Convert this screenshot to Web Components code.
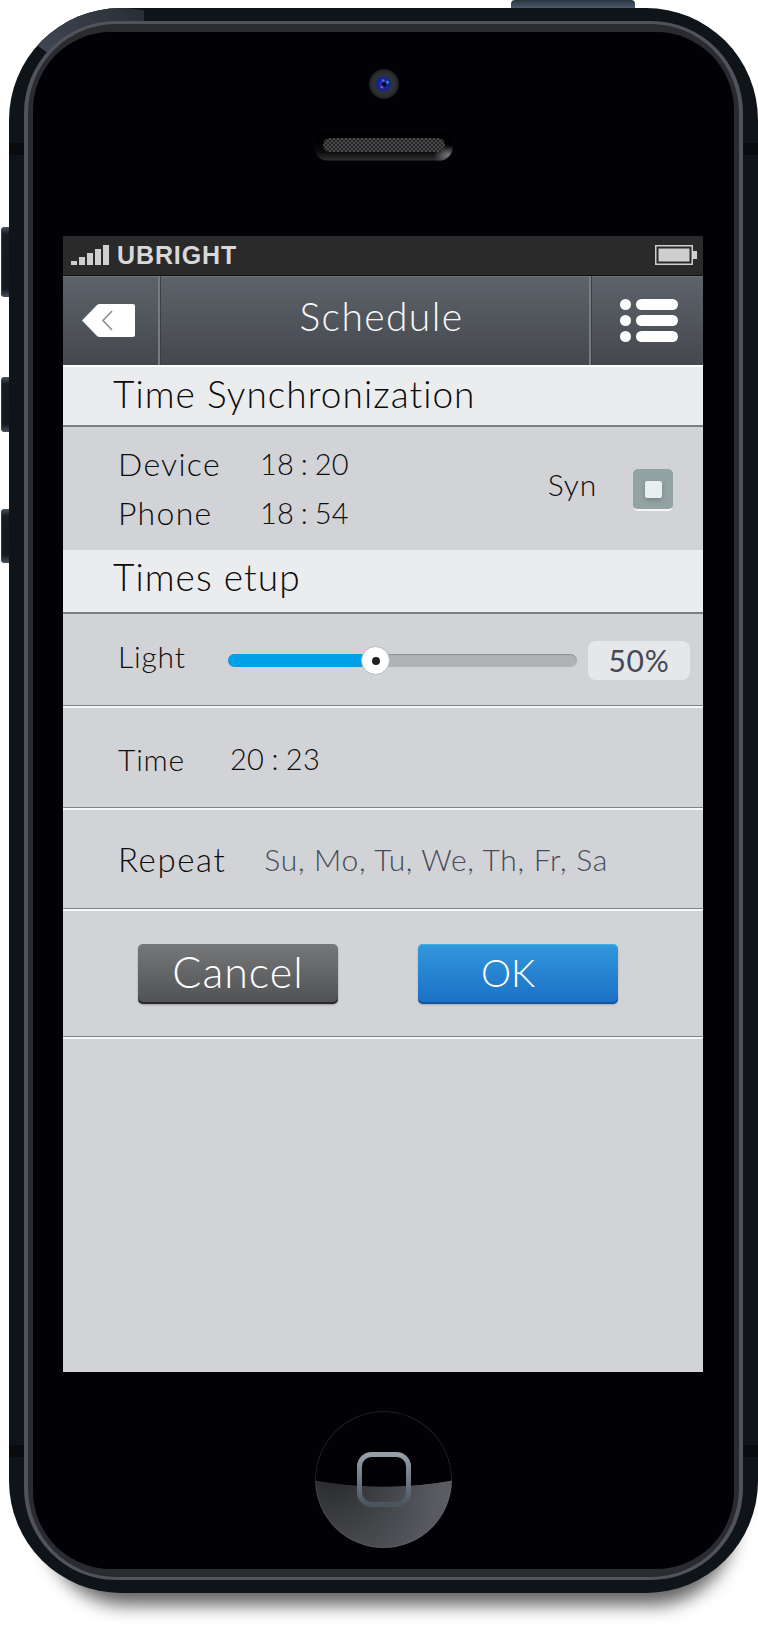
<!DOCTYPE html>
<html>
<head>
<meta charset="utf-8">
<title>Schedule</title>
<style>
  html, body { margin: 0; background: #fff; height: 1625px; overflow: hidden; }
  body { font-family: "Lato", "Liberation Sans", sans-serif; }
</style>
</head>
<body>
<phone-frame>
  <status-bar label="UBRIGHT"></status-bar>
  <nav-bar title="Schedule"></nav-bar>
  <section-head style="height:60px;padding-bottom:6px">Time Synchronization</section-head>
  <sync-panel device="18 : 20" phone="18 : 54"></sync-panel>
  <section-head style="height:64px">Times etup</section-head>
  <light-row value="50"></light-row>
  <setting-row label="Time" gap="45" height="102" style="padding-bottom:1px"><span>20 : 23</span></setting-row>
  <setting-row label="Repeat" gap="38" height="101" wide muted><span>Su, Mo, Tu, We, Th, Fr, Sa</span></setting-row>
  <action-row></action-row>
</phone-frame>

<script>
class PhoneFrame extends HTMLElement {
  constructor() {
    super();
    this.attachShadow({ mode: 'open' });
  }

  connectedCallback() {
    this.shadowRoot.innerHTML = `
      <style>
        :host {
          display: block;
          position: relative;
          box-sizing: border-box;
          width: 749px;
          height: 1585px;
          margin: 8px 0 0 9px;
          padding: 13px 15px;
          border-radius: 112px;
          background: #0f1418;
          box-shadow: 6px 42px 18px -30px rgba(0,0,0,.62);
        }
        .wedge {
          position: absolute;
          left: 0;
          top: 0;
          width: 224px;
          height: 224px;
          border-radius: 112px;
          background: linear-gradient(250deg, #2a2e35 30%, #424b58 75%);
          clip-path: polygon(0 17px, 0 0, 135px 0, 135px 30px, 50px 53px);
        }
        .notch { position: absolute; width: 15px; height: 12px; background: #090b0e; }
        .notch.tl { left: 0; top: 135px; }
        .notch.tr { right: 0; top: 135px; }
        .notch.bl { left: 0; bottom: 136px; }
        .notch.br { right: 0; bottom: 136px; }
        .side {
          position: absolute;
          left: -8px;
          width: 8px;
          border-radius: 4px 0 0 4px;
          background: linear-gradient(#4a535f 0, #161b21 7px, #141920 calc(100% - 8px), #47505c 100%);
          box-shadow: inset 1px 0 0 #3a424c;
        }
        .top-key {
          position: absolute;
          left: 502px;
          top: -8px;
          width: 124px;
          height: 8px;
          border-radius: 4px 4px 0 0;
          background: linear-gradient(#2b3541, #4c5a6b);
        }
        .ring {
          position: relative;
          box-sizing: border-box;
          height: 100%;
          border: solid #50535c;
          border-width: 3px 4px;
          border-radius: 92px;
          background: #2a2b2f;
          padding: 8px 5px;
        }
        .glass {
          box-sizing: border-box;
          height: 100%;
          border-radius: 78px;
          background: #010106;
          display: flex;
          flex-direction: column;
        }
        .top {
          height: 204px;
          flex: none;
          box-sizing: border-box;
          padding-top: 37px;
          display: flex;
          flex-direction: column;
          align-items: center;
          gap: 33px;
        }
        .camera {
          width: 30px;
          height: 30px;
          border-radius: 50%;
          background:
            radial-gradient(circle 2px at 62% 44%, #19d3c0, transparent),
            radial-gradient(circle 2px at 43% 60%, #d05cf0, transparent),
            radial-gradient(circle 2px at 47% 38%, #5a80ff, transparent),
            radial-gradient(circle 3px at 50% 52%, #04061c 60%, transparent),
            radial-gradient(circle 9px at 48% 50%, #2a3ce0 0, #161f8a 65%, transparent 100%),
            radial-gradient(circle 15px at 50% 50%, #3c4046, #2a2d31 80%, #1b1d20);
        }
        .speaker {
          box-sizing: border-box;
          width: 139px;
          height: 29px;
          padding: 6px 8px 9px 9px;
          border-radius: 15px;
          background:
            radial-gradient(ellipse 14px 10px at 96% 80%, #77787a, transparent),
            linear-gradient(#000 35%, #0d0d0e 70%, #2e2e30 96%, #0a0a0b);
        }
        .mesh {
          height: 14px;
          border-radius: 7px;
          background: repeating-conic-gradient(#4a4a4c 0 25%, #242426 0 50%) 0 0 / 4px 4px;
        }
        .screen {
          box-sizing: border-box;
          flex: none;
          width: 640px;
          height: 1136px;
          margin-left: 30px;
          background: #d2d3d7;
          overflow: hidden;
          display: flex;
          flex-direction: column;
        }
        .bottom {
          flex: 1;
          display: flex;
          justify-content: center;
          padding-top: 39px;
        }
        .home {
          position: relative;
          width: 137px;
          height: 137px;
          border-radius: 50%;
          background:
            radial-gradient(circle 388px at 68.5px -312px, #020204 99.8%, transparent 100%),
            radial-gradient(circle 110px at 12% 45%, #26272a, transparent),
            linear-gradient(#4a4b50, #5c5d63 60%, #55565b);
          box-shadow: inset 0 0 0 1px rgba(120,125,130,.28);
          display: flex;
          align-items: center;
          justify-content: center;
        }
        .home svg { display: block; margin-top: -1px; }
      </style>
      <div class="wedge"></div>
      <div class="notch tl"></div><div class="notch tr"></div>
      <div class="notch bl"></div><div class="notch br"></div>
      <div class="side" style="top:219px;height:70px"></div>
      <div class="side" style="top:369px;height:55px"></div>
      <div class="side" style="top:501px;height:54px"></div>
      <div class="top-key"></div>
      <div class="ring">
        <div class="glass">
          <div class="top">
            <div class="camera"></div>
            <div class="speaker"><div class="mesh"></div></div>
          </div>
          <div class="screen"><slot></slot></div>
          <div class="bottom">
            <div class="home">
              <svg width="54" height="55" viewBox="0 0 54 55">
                <defs>
                  <linearGradient id="hb" x1="0" y1="0" x2="0" y2="1">
                    <stop offset="0" stop-color="#95a0a9"/>
                    <stop offset="1" stop-color="#4a545e"/>
                  </linearGradient>
                </defs>
                <rect x="2.5" y="2.5" width="49" height="50" rx="12" fill="none" stroke="url(#hb)" stroke-width="5"/>
              </svg>
            </div>
          </div>
        </div>
      </div>
    `;
  }
}

class StatusBar extends HTMLElement {
  constructor() {
    super();
    this.attachShadow({ mode: 'open' });
  }

  connectedCallback() {
    const label = this.getAttribute('label') || '';
    this.shadowRoot.innerHTML = `
      <style>
        :host {
          display: flex;
          flex: none;
          align-items: center;
          box-sizing: border-box;
          height: 40px;
          padding: 0 6px 1px 8px;
          background: #2a2a2a;
          border-bottom: 1px solid #111;
        }
        svg { display: block; }
        .name {
          margin-left: 7px;
          font: bold 25px/1 "Liberation Sans", sans-serif;
          letter-spacing: .9px;
          color: #d8d8d8;
        }
        .battery { margin-left: auto; }
      </style>
      <svg width="39" height="21" viewBox="0 0 39 21" fill="#cfcfcf">
        <rect x="0" y="16" width="6" height="4"/>
        <rect x="8" y="12" width="6" height="8"/>
        <rect x="16" y="8" width="6" height="12"/>
        <rect x="24" y="4" width="6" height="16"/>
        <rect x="32" y="0" width="6" height="20"/>
      </svg>
      <span class="name">${label}</span>
      <svg class="battery" width="42" height="20" viewBox="0 0 42 20">
        <rect x=".75" y=".75" width="36.5" height="18.5" fill="none" stroke="#cfcfcf" stroke-width="1.5"/>
        <rect x="3.5" y="3.5" width="31" height="13" fill="#cfcfcf"/>
        <rect x="38" y="6" width="4" height="8" fill="#cfcfcf"/>
      </svg>
    `;
  }
}

class NavBar extends HTMLElement {
  constructor() {
    super();
    this.attachShadow({ mode: 'open' });
  }

  connectedCallback() {
    const title = this.getAttribute('title') || '';
    this.shadowRoot.innerHTML = `
      <style>
        :host {
          display: grid;
          flex: none;
          grid-template-columns: 95px 2px 1fr 2px 112px;
          box-sizing: border-box;
          height: 91px;
          border-bottom: 2px solid #fff;
          background: linear-gradient(#5e636b, #44484d);
          box-shadow: inset 0 1px 0 #6c7379;
        }
        .cell { display: flex; align-items: center; justify-content: center; }
        .back { padding-right: 4px; }
        .menu { padding-left: 3px; }
        .rule { background: #767d82; box-shadow: 1px 0 0 #3b3f44; }
        .title {
          padding: 0 0 10px 14px;
          font-size: 39px;
          font-weight: 300;
          color: #f7f8f9;
          letter-spacing: 1.4px;
        }
        svg { display: block; }
      </style>
      <div class="cell back">
        <svg width="53" height="33" viewBox="0 0 53 33">
          <path d="M0 16.5 L15 1 Q16 0 18 0 H51 Q53 0 53 2 V31 Q53 33 51 33 H18 Q16 33 15 32 Z" fill="#fff"/>
          <path d="M30 7 L21 16.5 L30 26" fill="none" stroke="#8b8e92" stroke-width="1.6"/>
        </svg>
      </div>
      <div class="rule"></div>
      <div class="cell title">${title}</div>
      <div class="rule"></div>
      <div class="cell menu">
        <svg width="58" height="43" viewBox="0 0 58 43" fill="#fff">
          <circle cx="5.5" cy="5.5" r="5.5"/>
          <circle cx="5.5" cy="21.5" r="5.5"/>
          <circle cx="5.5" cy="37.5" r="5.5"/>
          <rect x="16" y="0" width="42" height="11" rx="5.5"/>
          <rect x="16" y="16" width="42" height="11" rx="5.5"/>
          <rect x="16" y="32" width="42" height="11" rx="5.5"/>
        </svg>
      </div>
    `;
  }
}

class SectionHead extends HTMLElement {
  constructor() {
    super();
    this.attachShadow({ mode: 'open' }).innerHTML = `
      <style>
        :host {
          display: flex;
          flex: none;
          align-items: center;
          box-sizing: border-box;
          height: 61px;
          padding: 0 0 9px 50px;
          background: #ebecee;
          border-bottom: 2px solid #777f85;
          font-size: 37px;
          font-weight: 300;
          letter-spacing: 1.05px;
          color: #0a0a0a;
        }
      </style>
      <slot></slot>
    `;
  }
}

class SyncPanel extends HTMLElement {
  constructor() {
    super();
    this.attachShadow({ mode: 'open' });
  }

  connectedCallback() {
    this.shadowRoot.innerHTML = `
      <style>
        :host {
          display: flex;
          flex: none;
          align-items: center;
          box-sizing: border-box;
          height: 123px;
          padding: 0 30px 0 55px;
          font-size: 30px;
          font-weight: 300;
          letter-spacing: .8px;
          color: #0d0d0d;
        }
        .times {
          display: grid;
          grid-template-columns: 142px auto;
          align-items: center;
          row-gap: 11px;
          line-height: 38px;
        }
        .label { font-size: 32px; letter-spacing: 1.3px; }
        .digits { font-size: 29px; letter-spacing: .1px; word-spacing: -1px; }
        .syn { margin: 0 36px 10px auto; }
        .check {
          box-sizing: border-box;
          width: 40px;
          height: 42px;
          margin-top: 3px;
          border-radius: 5px;
          background: #93a3a3;
          border-bottom: 2px solid #f4f5f6;
          display: flex;
          align-items: center;
          justify-content: center;
        }
        .check i {
          display: block;
          width: 17px;
          height: 17px;
          border-radius: 2px;
          background: #e9eeee;
          box-shadow: 0 2px 4px rgba(60,70,70,.35);
        }
      </style>
      <div class="times">
        <span class="label">Device</span><span class="digits">${this.getAttribute('device')}</span>
        <span class="label">Phone</span><span class="digits">${this.getAttribute('phone')}</span>
      </div>
      <span class="syn">Syn</span>
      <div class="check"><i></i></div>
    `;
  }
}

const rowStyle = `
  :host {
    display: flex;
    flex: none;
    align-items: center;
    box-sizing: border-box;
    padding-left: 55px;
    padding-bottom: 3px;
    box-shadow: inset 0 -2px 0 #f5f6f7, inset 0 -3px 0 #7d848b;
    font-size: 30px;
    font-weight: 300;
    letter-spacing: .8px;
    color: #0d0d0d;
  }
`;

class LightRow extends HTMLElement {
  constructor() {
    super();
    this.attachShadow({ mode: 'open' });
  }

  connectedCallback() {
    const value = this.getAttribute('value');
    this.shadowRoot.innerHTML = `
      <style>
        ${rowStyle}
        :host { height: 94px; padding-right: 13px; }
        .label { width: 110px; margin-top: -7px; }
        .track {
          position: relative;
          flex: none;
          width: 349px;
          height: 13px;
          margin-top: 2px;
          border-radius: 7px;
          background: #b0b3b6;
          box-shadow: inset 0 1px 1px rgba(0,0,0,.2);
        }
        .fill {
          width: ${value * 0.84 + 4}%;
          height: 100%;
          border-radius: 7px 0 0 7px;
          background: #00a0e9;
        }
        .knob {
          position: absolute;
          left: 133px;
          top: -8px;
          box-sizing: border-box;
          width: 29px;
          height: 29px;
          border-radius: 50%;
          border: 1px solid #b5b7ba;
          background: #fff;
          display: flex;
          align-items: center;
          justify-content: center;
        }
        .knob i { width: 8px; height: 8px; border-radius: 50%; background: #222; }
        .value {
          box-sizing: border-box;
          width: 102px;
          height: 39px;
          margin: 2px 0 0 auto;
          border-radius: 8px;
          background: #e6e7e9;
          color: #454856;
          font-weight: 400;
          text-align: center;
          line-height: 39px;
        }
      </style>
      <span class="label">Light</span>
      <div class="track"><div class="fill"></div><div class="knob"><i></i></div></div>
      <span class="value">${value}%</span>
    `;
  }
}

class SettingRow extends HTMLElement {
  constructor() {
    super();
    this.attachShadow({ mode: 'open' });
  }

  connectedCallback() {
    const muted = this.hasAttribute('muted');
    const wide = this.hasAttribute('wide');
    this.shadowRoot.innerHTML = `
      <style>
        ${rowStyle}
        :host { height: ${this.getAttribute('height')}px; }
        .label { ${wide ? 'font-size: 33px; letter-spacing: 1.6px;' : ''} }
        .value {
          margin-left: ${this.getAttribute('gap')}px;
          ${muted ? 'color: #474a58; letter-spacing: .7px;' : 'font-size: 29px; letter-spacing: .3px; word-spacing: -1px;'}
        }
      </style>
      <span class="label">${this.getAttribute('label')}</span>
      <span class="value"><slot></slot></span>
    `;
  }
}

class ActionRow extends HTMLElement {
  constructor() {
    super();
    this.attachShadow({ mode: 'open' }).innerHTML = `
      <style>
        ${rowStyle}
        :host { height: 128px; padding: 0 0 2px 75px; gap: 80px; }
        button {
          width: 200px;
          height: 60px;
          padding: 0 0 5px;
          border: none;
          border-radius: 5px;
          font-family: inherit;
          font-size: 43px;
          font-weight: 300;
          letter-spacing: 1px;
          color: #fff;
        }
        .cancel {
          background: linear-gradient(#767779, #505153);
          box-shadow: inset 0 -2px 0 #2a2a2b, 0 1px 2px rgba(0,0,0,.25);
        }
        .ok {
          padding-right: 20px;
          font-size: 38px;
          letter-spacing: 0;
          background: linear-gradient(#3398dc, #1a6fc4);
          box-shadow: inset 0 1px 0 #3fb0e8, inset 0 -2px 0 #10559f, 0 1px 2px rgba(0,0,0,.2);
        }
      </style>
      <button class="cancel">Cancel</button>
      <button class="ok">OK</button>
    `;
  }
}

customElements.define('phone-frame', PhoneFrame);
customElements.define('status-bar', StatusBar);
customElements.define('nav-bar', NavBar);
customElements.define('section-head', SectionHead);
customElements.define('sync-panel', SyncPanel);
customElements.define('light-row', LightRow);
customElements.define('setting-row', SettingRow);
customElements.define('action-row', ActionRow);
</script>
</body>
</html>
